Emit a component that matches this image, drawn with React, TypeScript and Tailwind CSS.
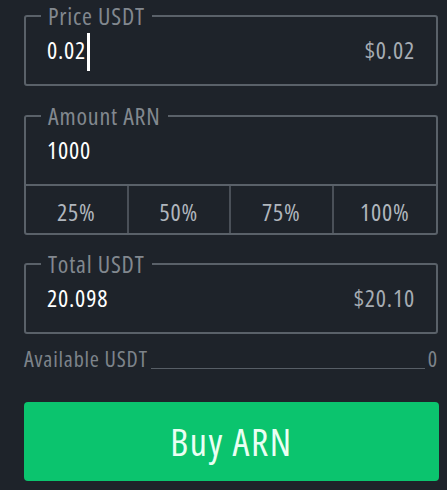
import React from "react";

const font = { fontFamily: '"Open Sans", "Roboto", sans-serif' };

const Field: React.FC<{ label: string; value: string; usd?: string; caret?: boolean }> = ({
  label,
  value,
  usd,
  caret,
}) => (
  <fieldset className="rounded-[3px] border-2 border-[#5a6169] px-[21px] pb-[19px]">
    <legend className="ml-[-6px] px-[7px] text-[24px] leading-[32px] text-[#82888f]">{label}</legend>
    <div className="mt-[3px] flex h-[30px] items-center justify-between">
      <div className="flex h-[30px] items-center text-[24px] leading-[30px] text-white">
        {value}
        {caret && <span className="ml-[1px] mt-[3px] h-[38px] w-[3px] shrink-0 bg-white" />}
      </div>
      {usd && <div className="text-[24px] leading-[30px] text-[#a6acb3]">{usd}</div>}
    </div>
  </fieldset>
);

export default function App() {
  return (
    <div
      className="h-[490px] w-[447px] overflow-hidden bg-[#1e232a] pl-[24px] pr-[9px] font-stretch-condensed tracking-[0.8px]"
      style={font}
    >
      <Field label="Price USDT" value="0.02" usd="$0.02" caret />

      <div className="mt-[14px]">
        <fieldset className="rounded-t-[3px] border-2 border-b-0 border-[#5a6169] px-[21px] pb-[19px]">
          <legend className="ml-[-6px] px-[7px] text-[24px] leading-[32px] text-[#82888f]">Amount ARN</legend>
          <div className="mt-[3px] h-[30px] text-[24px] leading-[30px] text-white">1000</div>
        </fieldset>
        <div className="grid grid-cols-4 rounded-b-[3px] border-2 border-[#5a6169]">
          {["25%", "50%", "75%", "100%"].map((p, i) => (
            <div
              key={p}
              className={`flex h-[47px] items-center justify-center pt-[5px] text-[24px] text-[#b0b6bd] ${
                i < 3 ? "border-r-2 border-[#4a5058]" : ""
              }`}
            >
              {p}
            </div>
          ))}
        </div>
      </div>

      <div className="mt-[13px]">
        <Field label="Total USDT" value="20.098" usd="$20.10" />
      </div>

      <div className="mt-[12px] flex items-end text-[22px] leading-[24px] text-[#7d838a]">
        <span>Available USDT</span>
        <span className="mx-[3px] mb-[1px] h-px flex-1 bg-[#575e66]" />
        <span>0</span>
      </div>

      <button className="mt-[32px] flex h-[79px] w-[415px] items-center justify-center rounded-[4px] bg-[#0bc46e] text-[38px] tracking-[1.6px] text-[#eafff3]">
        Buy ARN
      </button>
    </div>
  );
}
